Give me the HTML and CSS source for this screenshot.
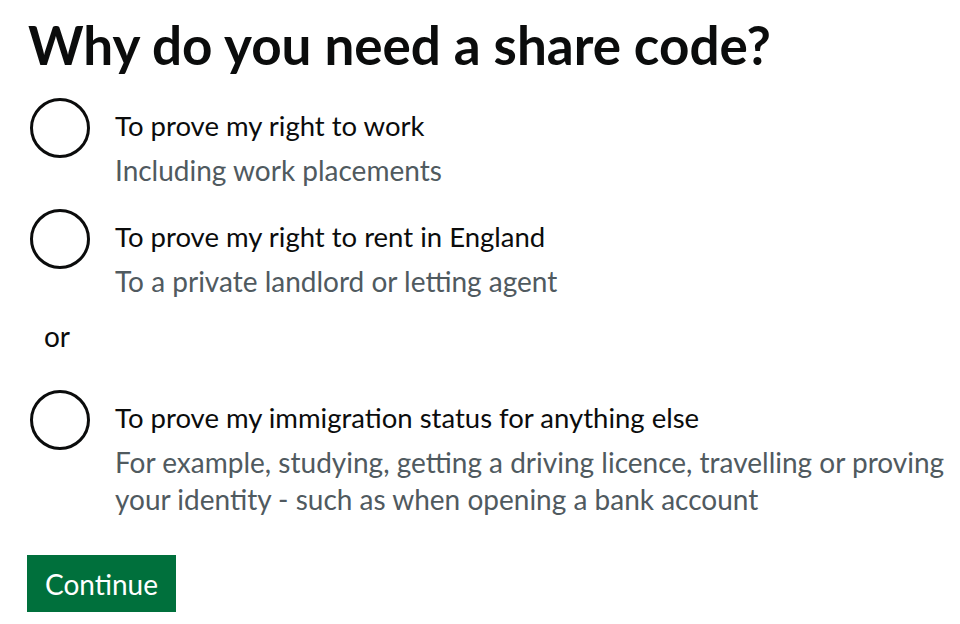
FILE: index.html
```html
<!DOCTYPE html>
<html lang="en">
<head>
<meta charset="utf-8">
<title>Why do you need a share code?</title>
<link rel="stylesheet" href="styles.css">
</head>
<body>
<main class="page">
  <form class="form">
    <fieldset class="fieldset">
      <legend class="heading">Why do you need a share code?</legend>
      <div class="radios">
        <label class="radio-item">
          <input class="radio-input" type="radio" name="reason" value="work">
          <span class="radio-circle"></span>
          <span class="radio-text">
            <span class="radio-label">To prove my right to work</span>
            <span class="radio-hint">Including work placements</span>
          </span>
        </label>
        <label class="radio-item">
          <input class="radio-input" type="radio" name="reason" value="rent">
          <span class="radio-circle"></span>
          <span class="radio-text">
            <span class="radio-label">To prove my right to rent in England</span>
            <span class="radio-hint">To a private landlord or letting agent</span>
          </span>
        </label>
        <div class="radio-divider">or</div>
        <label class="radio-item">
          <input class="radio-input" type="radio" name="reason" value="other">
          <span class="radio-circle"></span>
          <span class="radio-text">
            <span class="radio-label">To prove my immigration status for anything else</span>
            <span class="radio-hint">For example, studying, getting a driving licence, travelling or proving your identity - such as when opening a bank account</span>
          </span>
        </label>
      </div>
    </fieldset>
    <button class="button" type="submit">Continue</button>
  </form>
</main>
</body>
</html>
```

FILE: styles.css
```css
html, body {
  margin: 0;
  padding: 0;
  background: #ffffff;
}

body {
  font-family: Lato, "Liberation Sans", Arial, sans-serif;
  color: #0b0c0c;
  -webkit-font-smoothing: antialiased;
}

.page {
  padding: 15px 0 0 27px;
}

.form {
  margin: 0;
}

.fieldset {
  margin: 0;
  padding: 0;
  border: 0;
  min-width: 0;
}

.heading {
  display: block;
  padding: 0;
  margin: 0 0 23px 1px;
  font-size: 53px;
  line-height: 60px;
  font-weight: 700;
  color: #0b0c0c;
}

.radios {
  display: flex;
  flex-direction: column;
}

.radio-item {
  display: flex;
  align-items: flex-start;
  gap: 25px;
  margin-bottom: 20px;
  cursor: pointer;
}

.radio-input {
  position: absolute;
  opacity: 0;
  width: 1px;
  height: 1px;
  margin: 0;
}

.radio-circle {
  flex: none;
  width: 60px;
  height: 60px;
  box-sizing: border-box;
  margin-left: 3px;
  border: 3px solid #0b0c0c;
  border-radius: 50%;
  background: #ffffff;
}

.radio-text {
  display: flex;
  flex-direction: column;
  padding-top: 9px;
}

.radio-label {
  font-size: 27.5px;
  line-height: 37px;
  color: #0b0c0c;
}

.radio-hint {
  margin-top: 8px;
  font-size: 28px;
  line-height: 37px;
  color: #505a5f;
}

.radio-divider {
  width: 60px;
  margin: -2px 0 35px 0;
  text-align: center;
  font-size: 28px;
  line-height: 37px;
  color: #0b0c0c;
}

.button {
  display: inline-block;
  margin: 17px 0 0 0;
  padding: 9px 18px 8px;
  border: 0;
  border-radius: 0;
  background: #00703c;
  box-shadow: 0 3px 0 #002d18;
  color: #ffffff;
  font-family: inherit;
  font-size: 28px;
  line-height: 40px;
  cursor: pointer;
}
```
